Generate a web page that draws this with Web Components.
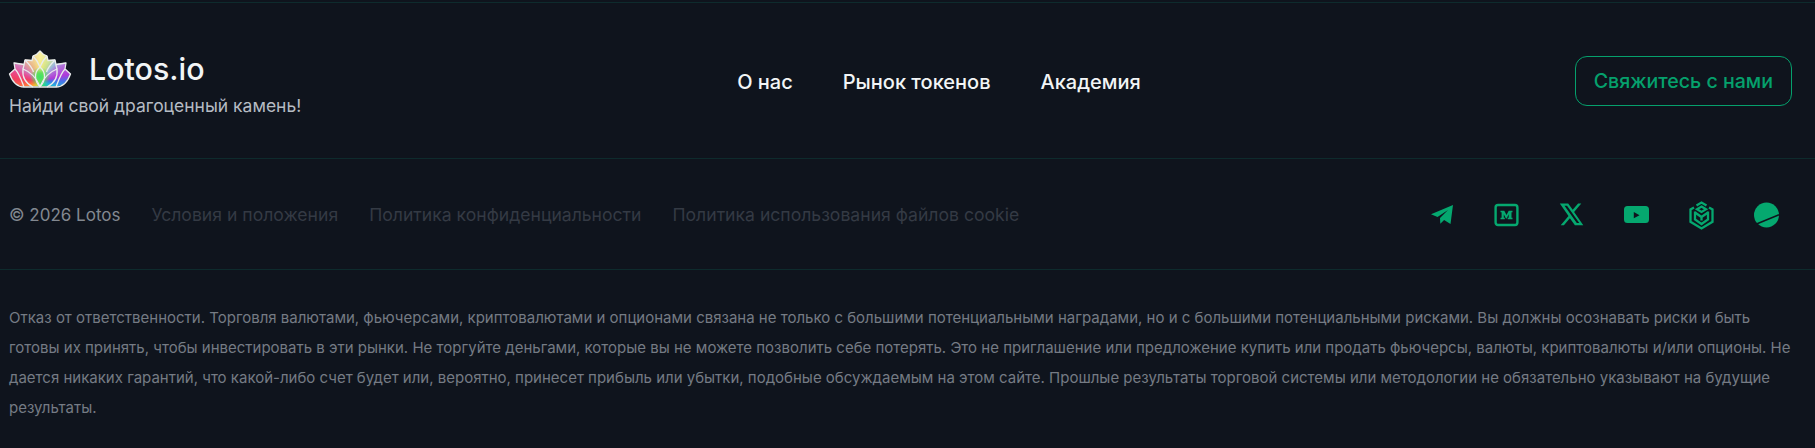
<!DOCTYPE html>
<html lang="ru">
<head>
<meta charset="utf-8">
<title>Lotos.io</title>
<style>
  html, body { margin: 0; background: #0f141d; }
  body { font-family: Inter, "Noto Sans", sans-serif; }
</style>
</head>
<body>
<site-footer>
  <footer-top>
    <footer-brand slot="brand" tagline="Найди свой драгоценный камень!">Lotos.io</footer-brand>
    <nav-link slot="nav">О нас</nav-link>
    <nav-link slot="nav">Рынок токенов</nav-link>
    <nav-link slot="nav">Академия</nav-link>
    <contact-button slot="action">Свяжитесь с нами</contact-button>
  </footer-top>
  <footer-legal>
    <span slot="copy">© 2026 Lotos</span>
    <legal-link slot="links">Условия и положения</legal-link>
    <legal-link slot="links">Политика конфиденциальности</legal-link>
    <legal-link slot="links">Политика использования файлов cookie</legal-link>
    <social-icon slot="social" name="telegram"></social-icon>
    <social-icon slot="social" name="medium"></social-icon>
    <social-icon slot="social" name="x"></social-icon>
    <social-icon slot="social" name="youtube"></social-icon>
    <social-icon slot="social" name="bnb"></social-icon>
    <social-icon slot="social" name="planet"></social-icon>
  </footer-legal>
  <footer-disclaimer>Отказ от ответственности. Торговля валютами, фьючерсами, криптовалютами и опционами связана не только с большими потенциальными наградами, но и с большими потенциальными рисками. Вы должны осознавать риски и быть готовы их принять, чтобы инвестировать в эти рынки. Не торгуйте деньгами, которые вы не можете позволить себе потерять. Это не приглашение или предложение купить или продать фьючерсы, валюты, криптовалюты и/или опционы. Не дается никаких гарантий, что какой-либо счет будет или, вероятно, принесет прибыль или убытки, подобные обсуждаемым на этом сайте. Прошлые результаты торговой системы или методологии не обязательно указывают на будущие результаты.</footer-disclaimer>
</site-footer>

<script>
const icons = {
  telegram: `<path d="M24 3 2 12.300l6.500 2.700L19 8l-8 8 .3 5.700 3.800-3.700 6.400 4z"/>`,
  medium: `<rect x="1.600" y="3" width="21.800" height="20" rx="2.400" fill="none" stroke="currentColor" stroke-width="2.400"/><path d="M6.500 8.700h3.800l2.200 4.300 2.200-4.300h3.800v1.600h-1v5.400h1v1.600h-4.800v-1.600h1v-3.500l-2 4.200h-.8l-2.100-4.200v3.500h1v1.600H6.500v-1.600h1.100v-5.400H6.500z"/>`,
  x: `<path d="M.8 1.500h8.400l4.500 6.300 5.400-6.300h3.200l-7.200 8.400 9.200 13.300h-8.400l-5-7-6 7h-3.200l7.800-9.100zm4.700 2.300 12.300 17.100h2.500L8 3.800z"/>`,
  youtube: `<path fill-rule="evenodd" d="M3.500 4h18a3.500 3.500 0 0 1 3.500 3.500v10a3.500 3.500 0 0 1-3.500 3.500h-18A3.500 3.500 0 0 1 0 17.500v-10A3.500 3.500 0 0 1 3.500 4zm6.300 6v6.300l5.700-3.150z"/>`,
  bnb: `<g fill="none" stroke="currentColor" stroke-width="2.300"><path d="M7.500 3.500 12.500 0.500 17.500 3.500"/><path d="M12.500 4.500 17 7.300 12.500 10 8 7.300z"/><path d="M5 5.500 1.500 7.500V19.800L12.500 26.500 23.500 19.800V7.500L20 5.500"/><path d="M6 9.500V17.500L12.500 22 19 17.500V9.500"/><path d="M6 10.500 12.500 15 19 10.500M12.500 15V18.500"/></g>`,
  planet: `<circle cx="12.500" cy="13" r="12.500"/><path d="M2.500 22 25 12.800" fill="none" stroke="#0f141d" stroke-width="1.500"/>`
};

class SiteFooter extends HTMLElement {
  constructor() {
    super();
    this.attachShadow({ mode: 'open' }).innerHTML = `
      <style>
        :host { display: block; height: 448px; background: #0f141d; padding-top: 2px; box-sizing: border-box; overflow: hidden; }
        .wrap { border-top: 1px solid #0e2b2d; }
      </style>
      <div class="wrap"><slot></slot></div>`;
  }
}

class FooterTop extends HTMLElement {
  constructor() {
    super();
    this.attachShadow({ mode: 'open' }).innerHTML = `
      <style>
        :host { display: flex; justify-content: space-between; align-items: center; height: 155px; padding: 0 23px 0 9px; border-bottom: 1px solid #0e2b2d; }
        .nav { display: flex; gap: 50px; margin: 3px 0 0 2px; }
        .brand { margin-top: 6px; }
      </style>
      <div class="brand"><slot name="brand"></slot></div>
      <div class="nav"><slot name="nav"></slot></div>
      <div><slot name="action"></slot></div>`;
  }
}

class FooterBrand extends HTMLElement {
  constructor() {
    super();
    this.attachShadow({ mode: 'open' }).innerHTML = `
      <style>
        :host { display: block; }
        .logo { display: flex; align-items: center; gap: 18px; color: #f2f5f6; font-size: 30.400px; font-weight: 500; line-height: 38px; }
        .flower { display: grid; width: 62px; height: 36px; }
        .flower > * { grid-area: 1 / 1; }
        .paint {
          clip-path: path('M31 0 L34.500 3.500 L38 5 L39 9.500 L46 9 L47 13.500 L57 12 L56 18 L61.500 23 C59 30 54 36 47 36 L15 36 C8 36 3 30 .500 23 L6 18 L5 12 L15 13.500 L16 9 L23 9.500 L24 5 L27.500 3.500 Z');
          background:
            radial-gradient(circle at 31px 26px, #3ee06a 0, #5ee05c 4px, transparent 10px),
            linear-gradient(rgba(255,255,255,.3) 0, transparent 16px),
            conic-gradient(from 0deg at 31px 30px, #f9ec80 0, #c8e08a 25deg, #9ab8d8 40deg, #b070d8 55deg, #b03ad8 77deg, #4a70e8 90deg, #1fb8d8 110deg, #22e070 150deg, #22e070 180deg, #d8e040 210deg, #ffb030 235deg, #ff7040 255deg, #f23e60 275deg, #e84a90 290deg, #cf78b8 305deg, #e8b088 330deg, #f9ec80 360deg);
        }
        svg { display: block; overflow: visible; position: relative; z-index: 1; }
        .tag { color: #b6bcc4; font-size: 17.500px; line-height: 24px; margin-top: 6px; }
      </style>
      <div class="logo">
        <div class="flower">
          <div class="paint"></div>
          <svg width="62" height="36" viewBox="0 0 62 36" fill="none" stroke="#e9ecec" stroke-width="1.300" stroke-linejoin="round">
            <path d="M31 0 L34.500 3.500 L38 5 L39 9.500 L46 9 L47 13.500 L57 12 L56 18 L61.500 23 C59 30 54 36 47 36 L15 36 C8 36 3 30 .500 23 L6 18 L5 12 L15 13.500 L16 9 L23 9.500 L24 5 L27.500 3.500 Z"/>
            <path d="M31 16 C25 21 25 30 31 35.500 C37 30 37 21 31 16z"/>
            <path d="M31 35.500 C27 26 22 21 14 18 C13 27 18 33 24 36"/>
            <path d="M31 35.500 C35 26 40 21 48 18 C49 27 44 33 38 36"/>
            <path d="M31 16 C29 11 27 8 24 5M31 16 C33 11 35 8 38 5"/>
            <path d="M16 9 C19 12 23 16 24.500 21M46 9 C43 12 39 16 37.500 21"/>
            <path d="M15 13.500 C15 15 14.500 16 14 18M47 13.500 C47 15 47.500 16 48 18"/>
            <path d="M6 18 C10 22 12 28 15 36M56 18 C52 22 50 28 47 36"/>
          </svg>
        </div>
        <span><slot></slot></span>
      </div>
      <div class="tag">${this.getAttribute('tagline') || ''}</div>`;
  }
}

class NavLink extends HTMLElement {
  constructor() {
    super();
    this.attachShadow({ mode: 'open' }).innerHTML = `
      <style>:host { display: block; color: #f2f5f6; font-size: 20px; font-weight: 500; line-height: 28px; cursor: pointer; }</style>
      <slot></slot>`;
  }
}

class ContactButton extends HTMLElement {
  constructor() {
    super();
    this.attachShadow({ mode: 'open' }).innerHTML = `
      <style>
        :host { display: block; box-sizing: border-box; height: 50px; padding: 0 18px; border: 1px solid #05a06c; border-radius: 12px; color: #05a06c; font-size: 19.600px; font-weight: 500; line-height: 48px; cursor: pointer; }
      </style>
      <slot></slot>`;
  }
}

class FooterLegal extends HTMLElement {
  constructor() {
    super();
    this.attachShadow({ mode: 'open' }).innerHTML = `
      <style>
        :host { display: flex; align-items: center; justify-content: space-between; box-sizing: border-box; height: 111px; padding: 1px 23px 0 9px; border-bottom: 1px solid #0e2b2d; }
        .left { display: flex; align-items: center; gap: 31px; font-size: 17px; line-height: 24px; color: #828890; }
        .links { display: flex; gap: 31px; }
        .social { display: flex; gap: 40px; align-items: center; padding-right: 13px; }
      </style>
      <div class="left"><slot name="copy"></slot><div class="links"><slot name="links"></slot></div></div>
      <div class="social"><slot name="social"></slot></div>`;
  }
}

class LegalLink extends HTMLElement {
  constructor() {
    super();
    this.attachShadow({ mode: 'open' }).innerHTML = `
      <style>:host { display: block; color: #343a44; font-size: 17.600px; cursor: pointer; }</style>
      <slot></slot>`;
  }
}

class SocialIcon extends HTMLElement {
  constructor() {
    super();
    this.attachShadow({ mode: 'open' }).innerHTML = `
      <style>
        :host { display: block; width: 25px; height: 26px; color: #05a86f; cursor: pointer; }
        svg { display: block; overflow: visible; }
      </style>
      <svg width="25" height="26" viewBox="0 0 25 26" fill="currentColor">${icons[this.getAttribute('name')]}</svg>`;
  }
}

class FooterDisclaimer extends HTMLElement {
  constructor() {
    super();
    this.attachShadow({ mode: 'open' }).innerHTML = `
      <style>
        :host { display: block; padding: 33px 23px 0 9px; color: #757b84; font-size: 15px; line-height: 30px; }
      </style>
      <slot></slot>`;
  }
}

customElements.define('site-footer', SiteFooter);
customElements.define('footer-top', FooterTop);
customElements.define('footer-brand', FooterBrand);
customElements.define('nav-link', NavLink);
customElements.define('contact-button', ContactButton);
customElements.define('footer-legal', FooterLegal);
customElements.define('legal-link', LegalLink);
customElements.define('social-icon', SocialIcon);
customElements.define('footer-disclaimer', FooterDisclaimer);
</script>
</body>
</html>
